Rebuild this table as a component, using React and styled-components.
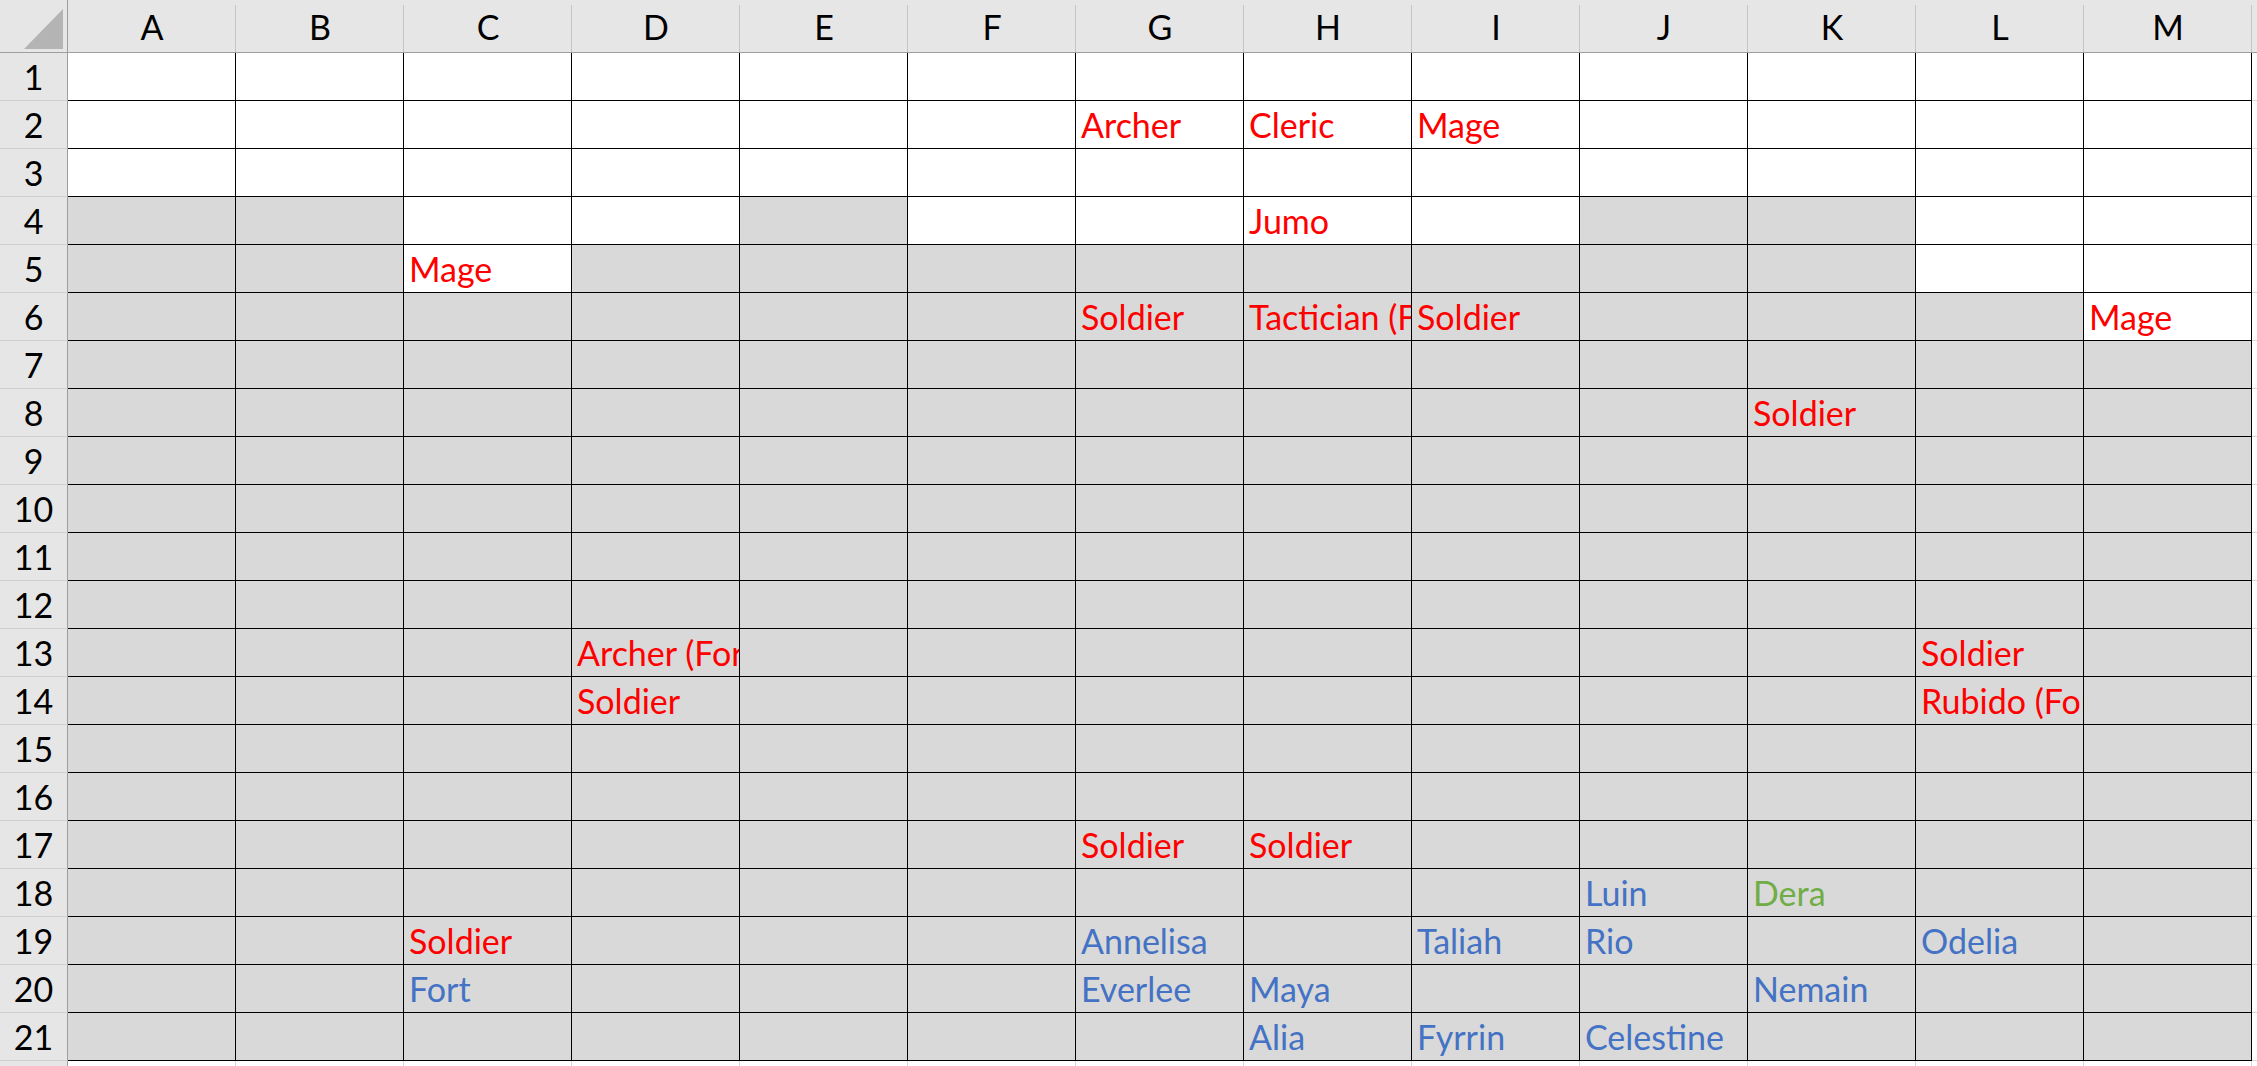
import React from 'react'
import styled, { createGlobalStyle } from 'styled-components'

const GlobalStyle = createGlobalStyle`
  html, body {
    margin: 0;
    padding: 0;
    background: #ffffff;
    overflow: hidden;
  }
`

const RED = '#ff0000'
const BLUE = '#4472c4'
const GREEN = '#70ad47'

const COLS = ['A', 'B', 'C', 'D', 'E', 'F', 'G', 'H', 'I', 'J', 'K', 'L', 'M']

// W = white cell, G = grey fill
const FILLS = {
  1: 'WWWWWWWWWWWWW',
  2: 'WWWWWWWWWWWWW',
  3: 'WWWWWWWWWWWWW',
  4: 'GGWWGWWWWGGWW',
  5: 'GGWGGGGGGGGWW',
  6: 'GGGGGGGGGGGGW',
}

const VALUES = {
  G2: ['Archer', RED],
  H2: ['Cleric', RED],
  I2: ['Mage', RED],
  H4: ['Jumo', RED],
  C5: ['Mage', RED],
  G6: ['Soldier', RED],
  H6: ['Tactician (Fort)', RED],
  I6: ['Soldier', RED],
  M6: ['Mage', RED],
  K8: ['Soldier', RED],
  D13: ['Archer (Fort)', RED],
  L13: ['Soldier', RED],
  D14: ['Soldier', RED],
  L14: ['Rubido (Fort)', RED],
  G17: ['Soldier', RED],
  H17: ['Soldier', RED],
  J18: ['Luin', BLUE],
  K18: ['Dera', GREEN],
  C19: ['Soldier', RED],
  G19: ['Annelisa', BLUE],
  I19: ['Taliah', BLUE],
  J19: ['Rio', BLUE],
  L19: ['Odelia', BLUE],
  C20: ['Fort', BLUE],
  G20: ['Everlee', BLUE],
  H20: ['Maya', BLUE],
  K20: ['Nemain', BLUE],
  H21: ['Alia', BLUE],
  I21: ['Fyrrin', BLUE],
  J21: ['Celestine', BLUE],
}

const Sheet = styled.div`
  display: grid;
  grid-template-columns: 68px repeat(13, 168px) 1fr;
  grid-template-rows: 53px repeat(21, 48px) 1fr;
  width: 2257px;
  height: 1066px;
  font-family: Lato, 'Open Sans', sans-serif;
  font-size: 34px;
  line-height: 1;
  color: #000;
`

const Corner = styled.div`
  position: relative;
  background: #e6e6e6;
  border-right: 1px solid #9e9e9e;
  border-bottom: 1px solid #9e9e9e;

  &::after {
    content: '';
    position: absolute;
    right: 4px;
    bottom: 3px;
    width: 0;
    height: 0;
    border-left: 39px solid transparent;
    border-bottom: 40px solid #b4b4b4;
  }
`

const ColHeader = styled.div`
  position: relative;
  display: flex;
  justify-content: center;
  align-items: flex-end;
  padding-bottom: 8px;
  box-sizing: border-box;
  background: #e6e6e6;
  border-bottom: 1px solid #9e9e9e;

  &::after {
    content: '';
    position: absolute;
    top: 5px;
    right: 0;
    bottom: 0;
    width: 1px;
    background: ${p => (p.$last ? 'transparent' : '#c4c4c4')};
  }
`

const RowHeader = styled.div`
  display: flex;
  justify-content: center;
  align-items: flex-end;
  padding-bottom: 6px;
  box-sizing: border-box;
  background: #e6e6e6;
  border-right: 1px solid #9e9e9e;
  border-bottom: 1px solid ${p => (p.$tail ? 'transparent' : '#d0d0d0')};
`

const Cell = styled.div`
  display: flex;
  align-items: flex-end;
  box-sizing: border-box;
  padding: 0 0 6px 5px;
  overflow: hidden;
  white-space: nowrap;
  background: ${p => (p.$grey ? '#d9d9d9' : '#ffffff')};
  color: ${p => p.$color || '#000'};
  border-right: 1px solid #000;
  border-bottom: 1px solid #000;
`

const EdgeCell = styled.div`
  background: #ffffff;
  border-right: ${p => (p.$side === 'bottom' ? '1px solid #d9d9d9' : 'none')};
  border-bottom: ${p => (p.$side === 'right' ? '1px solid #d9d9d9' : 'none')};
`

const HeaderTail = styled.div`
  background: #e6e6e6;
  border-bottom: 1px solid #9e9e9e;
`

const isGrey = (row, colIndex) => {
  const fills = FILLS[row]
  if (!fills) return true
  return fills[colIndex] === 'G'
}

const App = () => {
  const rows = Array.from({ length: 21 }, (_, i) => i + 1)

  return (
    <>
      <GlobalStyle />
      <Sheet>
        <Corner />
        {COLS.map((c, i) => (
          <ColHeader key={c} $last={i === COLS.length - 1 ? false : false}>{c}</ColHeader>
        ))}
        <HeaderTail />

        {rows.map(r => (
          <React.Fragment key={r}>
            <RowHeader>{r}</RowHeader>
            {COLS.map((c, i) => {
              const value = VALUES[c + r]
              return (
                <Cell key={c} $grey={isGrey(r, i)} $color={value && value[1]}>
                  {value ? value[0] : ''}
                </Cell>
              )
            })}
            <EdgeCell $side="right" />
          </React.Fragment>
        ))}

        <RowHeader $tail />
        {COLS.map(c => (
          <EdgeCell key={c} $side="bottom" />
        ))}
        <EdgeCell />
      </Sheet>
    </>
  )
}

export default App
